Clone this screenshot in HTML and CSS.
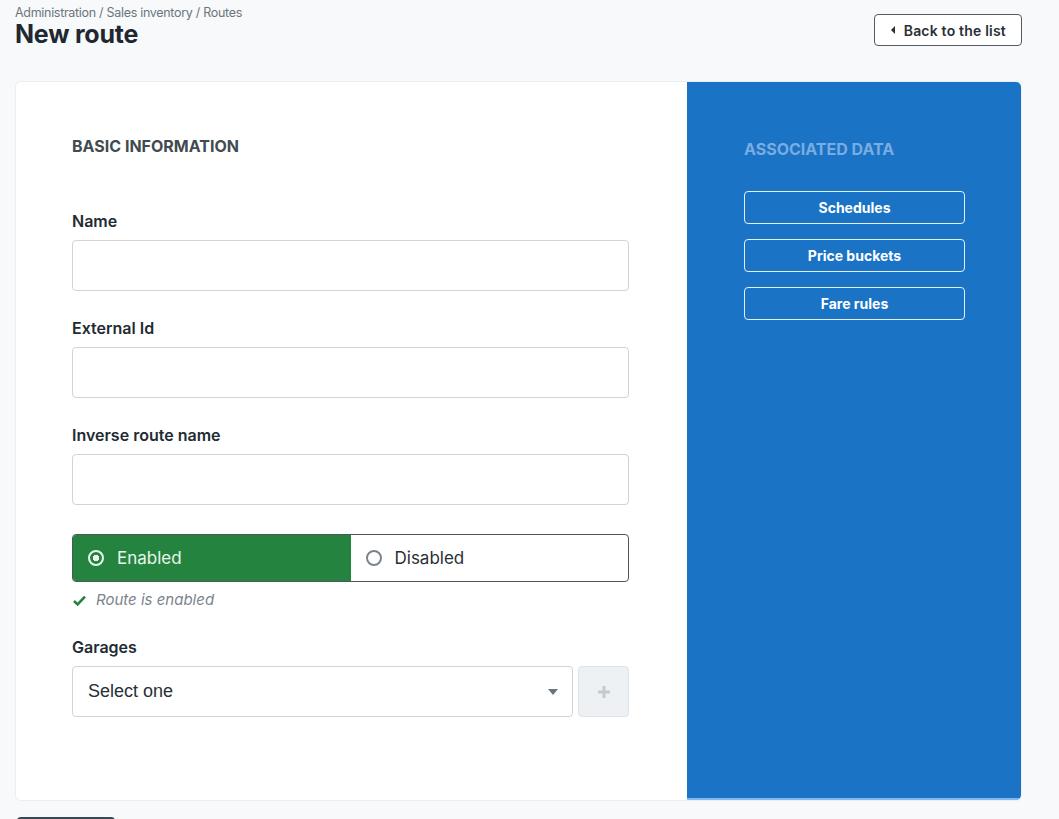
FILE: index.html
```html
<!DOCTYPE html>
<html lang="en">
<head>
    <meta charset="UTF-8">
    <meta name="viewport" content="width=device-width, initial-scale=1.0">
    <title>New route</title>
    <link rel="stylesheet" href="styles.css">
</head>
<body>
    <div class="page">
        <div class="page-header">
            <div>
                <div class="breadcrumb">Administration / Sales inventory / Routes</div>
                <h1>New route</h1>
            </div>
            <button class="back-btn" type="button"><span class="caret"></span>Back to the list</button>
        </div>

        <div class="card">
            <div class="card-main">
                <h2 class="section-title">Basic information</h2>

                <div class="form-group">
                    <label for="name">Name</label>
                    <input type="text" id="name">
                </div>

                <div class="form-group">
                    <label for="externalId">External Id</label>
                    <input type="text" id="externalId">
                </div>

                <div class="form-group">
                    <label for="inverseName">Inverse route name</label>
                    <input type="text" id="inverseName">
                </div>

                <div class="toggle">
                    <div class="toggle-option active">
                        <span class="radio"></span>Enabled
                    </div>
                    <div class="toggle-option">
                        <span class="radio"></span>Disabled
                    </div>
                </div>
                <div class="hint">
                    <svg width="13" height="11" viewBox="0 0 13 11"><path d="M1 6 L4.6 9.4 L12 1.6" fill="none" stroke="#24843f" stroke-width="2.6"/></svg>
                    Route is enabled
                </div>

                <div class="form-group">
                    <label for="garages">Garages</label>
                    <div class="select-row">
                        <div class="select" id="garages">
                            <span>Select one</span>
                            <span class="arrow"></span>
                        </div>
                        <button class="add-btn" type="button">
                            <svg width="14" height="14" viewBox="0 0 14 14"><path d="M7 1 V13 M1 7 H13" stroke="#c3cad1" stroke-width="3"/></svg>
                        </button>
                    </div>
                </div>
            </div>

            <div class="card-side">
                <h2 class="side-title">Associated data</h2>
                <button class="side-btn" type="button">Schedules</button>
                <button class="side-btn" type="button">Price buckets</button>
                <button class="side-btn" type="button">Fare rules</button>
            </div>
        </div>

        <div class="footer">
            <button class="save-btn" type="button" aria-label="Save"></button>
        </div>
    </div>
</body>
</html>
```

FILE: styles.css
```css
* {
    margin: 0;
    padding: 0;
    box-sizing: border-box;
}

body {
    font-family: Inter, "Liberation Sans", sans-serif;
    background: #f7f9fa;
    color: #222b33;
}

.page {
    padding: 5px 37px 0 15px;
}

.page-header {
    display: flex;
    justify-content: space-between;
    align-items: flex-start;
    height: 76px;
}

.breadcrumb {
    font-size: 12.5px;
    color: #6c757d;
    line-height: 16px;
    letter-spacing: -0.3px;
}

.page-header h1 {
    font-size: 25px;
    font-weight: 700;
    line-height: 26px;
    color: #1f2830;
    letter-spacing: -0.2px;
}

.back-btn {
    margin-top: 9px;
    height: 32px;
    padding: 0 15px 0 16px;
    background: #fff;
    border: 1px solid #555b61;
    border-radius: 4px;
    font-family: inherit;
    font-size: 14px;
    font-weight: 600;
    letter-spacing: 0.2px;
    color: #2a2f35;
    display: flex;
    align-items: center;
    gap: 9px;
}

.caret {
    width: 0;
    height: 0;
    border-top: 4px solid transparent;
    border-bottom: 4px solid transparent;
    border-right: 4px solid #2a2f35;
}

.card {
    display: flex;
    height: 720px;
    background: #fff;
    border: 1px solid #eceef0;
    border-radius: 6px;
    overflow: hidden;
}

.card-main {
    flex: 0 0 671px;
    padding: 54px 58px 0 56px;
}

.section-title {
    font-size: 16px;
    font-weight: 700;
    text-transform: uppercase;
    color: #424b50;
    line-height: 20px;
    margin-bottom: 55px;
}

.form-group {
    margin-bottom: 27px;
}

.form-group label {
    display: block;
    font-size: 16px;
    font-weight: 600;
    color: #222b33;
    line-height: 20px;
    margin-bottom: 9px;
}

.form-group input {
    width: 100%;
    height: 51px;
    border: 1px solid #ced4da;
    border-radius: 4px;
    background: #fff;
    font-size: 16px;
    padding: 0 15px;
}

.toggle {
    display: flex;
    height: 48px;
    margin-top: 29px;
    border: 1px solid #4f555a;
    border-radius: 4px;
    overflow: hidden;
}

.toggle-option {
    flex: 1;
    display: flex;
    align-items: center;
    gap: 13px;
    padding-left: 15px;
    font-size: 17px;
    color: #2a2f35;
}

.toggle-option.active {
    background: #24843f;
    color: #e8f7ec;
}

.radio {
    width: 16px;
    height: 16px;
    border: 2px solid #7b848c;
    border-radius: 50%;
}

.toggle-option.active .radio {
    border: 2px solid #e8f7ec;
    background: radial-gradient(circle, #e8f7ec 0 3px, transparent 3.5px);
}

.hint {
    display: flex;
    align-items: center;
    gap: 10px;
    margin: 9px 0 28px 1px;
    font-size: 15px;
    font-style: italic;
    color: #7b848c;
    line-height: 18px;
}

.select-row {
    display: flex;
    gap: 5px;
}

.select {
    flex: 1;
    height: 51px;
    border: 1px solid #ced4da;
    border-radius: 4px;
    display: flex;
    align-items: center;
    justify-content: space-between;
    padding: 0 14px 0 15px;
    font-family: "Liberation Sans", Arial, sans-serif;
    font-size: 18px;
    color: #2a2f35;
}

.arrow {
    width: 0;
    height: 0;
    border-left: 5px solid transparent;
    border-right: 5px solid transparent;
    border-top: 6px solid #6c757d;
}

.add-btn {
    width: 51px;
    height: 51px;
    background: #eef1f4;
    border: 1px solid #dfe3e7;
    border-radius: 4px;
    display: flex;
    align-items: center;
    justify-content: center;
}

.card-side {
    flex: 1;
    background: #1b73c6;
    padding: 57px 20px 0 57px;
    box-shadow: inset 0 -2px 0 #86b7ee;
}

.side-title {
    font-size: 16px;
    font-weight: 700;
    text-transform: uppercase;
    color: #79ade2;
    line-height: 20px;
    margin-bottom: 32px;
}

.side-btn {
    display: block;
    width: 221px;
    height: 33px;
    margin-bottom: 15px;
    background: transparent;
    border: 1px solid #e5effa;
    border-radius: 4px;
    font-family: inherit;
    font-size: 14px;
    font-weight: 700;
    color: #fff;
}

.footer {
    padding: 16px 0 0 2px;
}

.save-btn {
    display: block;
    width: 98px;
    height: 40px;
    background: #3b4a51;
    border: none;
    border-radius: 4px;
}
```
